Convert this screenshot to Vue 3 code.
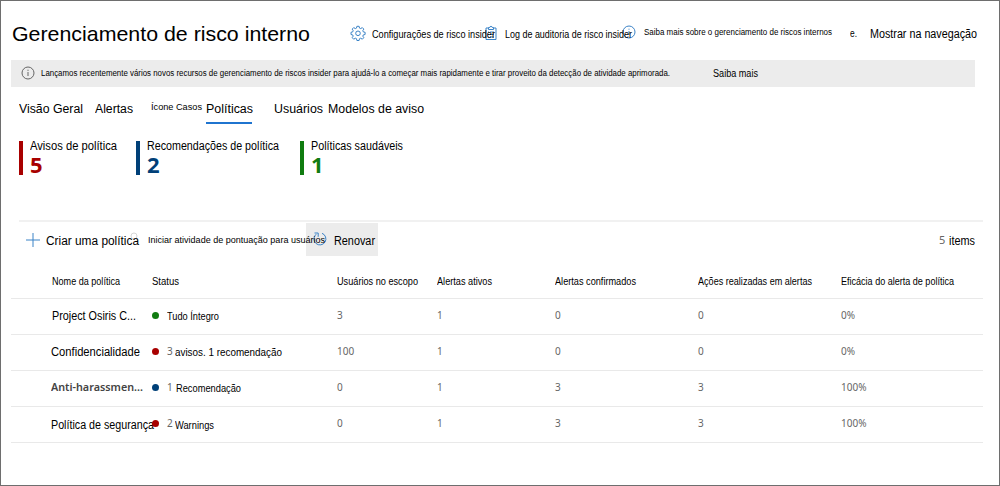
<script setup>
// Fits a label horizontally to the width (in px) given as the directive's value.
const vFit = {
  mounted(el, { value }) {
    const natural = el.getBoundingClientRect().width
    if (natural) el.style.transform = `scaleX(${value / natural})`
  },
}

const stats = [
  { label: 'Avisos de política', width: 87, value: 5, tone: 'red' },
  { label: 'Recomendações de política', width: 132, value: 2, tone: 'blue' },
  { label: 'Políticas saudáveis', width: 92, value: 1, tone: 'green' },
]

const columns = [
  { label: 'Nome da política', width: 68 },
  { label: 'Status', width: 27 },
  { label: 'Usuários no escopo', width: 81 },
  { label: 'Alertas ativos', width: 55 },
  { label: 'Alertas confirmados', width: 81 },
  { label: 'Ações realizadas em alertas', width: 114 },
  { label: 'Eficácia do alerta de política', width: 113 },
]

const rows = [
  { name: 'Project Osiris C...', nameWidth: 84, tone: 'green', count: '', status: 'Tudo Íntegro', statusWidth: 52, values: [3, 1, 0, 0, '0%'] },
  { name: 'Confidencialidade', nameWidth: 89, tone: 'red', count: '3', status: 'avisos. 1 recomendação', statusWidth: 107, values: [100, 1, 0, 0, '0%'] },
  { name: 'Anti-harassmen...', nameWidth: 92, strong: true, tone: 'blue', count: '1', status: 'Recomendação', statusWidth: 65, values: [0, 1, 3, 3, '100%'] },
  { name: 'Política de segurança', nameWidth: 103, tone: 'red', count: '2', status: 'Warnings', statusWidth: 39, values: [0, 1, 3, 3, '100%'] },
]
</script>

<template>
  <main class="page">
    <header class="top">
      <h1 v-fit="298" class="txt title">Gerenciamento de risco interno</h1>
      <svg class="ico" width="16" height="16" viewBox="0 0 16 16">
        <path d="M6.900 1.300h2.200l.4 1.800 1.200.5 1.600-1 1.500 1.500-1 1.600.5 1.200 1.800.4v2.200l-1.800.4-.5 1.200 1 1.600-1.500 1.500-1.600-1-1.200.5-.4 1.800H6.900l-.4-1.800-1.200-.5-1.600 1-1.500-1.500 1-1.600-.5-1.200-1.700-.4V7.300l1.700-.4.5-1.200-1-1.600 1.500-1.500 1.600 1 1.200-.5z" />
        <circle cx="8" cy="8.300" r="2.300" />
      </svg>
      <span v-fit="123" class="txt s11">Configurações de risco insider</span>
      <svg class="ico" width="14" height="16" viewBox="0 0 14 16">
        <path d="M4.500 3H2v11.500h10V3H9.500M4.500 4.500v-2h1.300a1.200 1.200 0 0 1 2.400 0h1.300v2zM4 7h1M6 7h4M4 9.500h1M6 9.500h4M4 12h1M6 12h4" />
      </svg>
      <span v-fit="127" class="txt s11">Log de auditoria de risco insider</span>
      <svg class="ico" width="14" height="14" viewBox="0 0 14 14">
        <circle cx="7" cy="7" r="6" />
        <path d="M7 6v4M7 3.700v1" />
      </svg>
      <span v-fit="188" class="txt s8">Saiba mais sobre o gerenciamento de riscos internos</span>
      <span v-fit="7" class="txt s10">e.</span>
      <span v-fit="107" class="txt s12">Mostrar na navegação</span>
    </header>

    <section class="banner">
      <svg class="info" width="14" height="14" viewBox="0 0 14 14">
        <circle cx="7" cy="7" r="6" />
        <path d="M7 6v4M7 3.700v1.200" />
      </svg>
      <span v-fit="629" class="txt s8">Lançamos recentemente vários novos recursos de gerenciamento de riscos insider para ajudá-lo a começar mais rapidamente e tirar proveito da detecção de atividade aprimorada.</span>
      <span v-fit="45" class="txt s10 more">Saiba mais</span>
    </section>

    <nav class="tabs">
      <span v-fit="64" class="txt s12">Visão Geral</span>
      <span v-fit="38" class="txt s12">Alertas</span>
      <span v-fit="51" class="txt s9">Ícone Casos</span>
      <span class="tab-active"><span v-fit="47" class="txt s12">Políticas</span></span>
      <span v-fit="49" class="txt s12">Usuários</span>
      <span v-fit="96" class="txt s12">Modelos de aviso</span>
    </nav>

    <section class="stats">
      <div v-for="s in stats" :key="s.label" class="stat" :class="s.tone">
        <span v-fit="s.width" class="txt s12 stat-label">{{ s.label }}</span>
        <strong class="stat-value">{{ s.value }}</strong>
      </div>
    </section>

    <section class="toolbar">
      <svg class="ico plus" width="14" height="14" viewBox="0 0 14 14"><path d="M7 0v14M0 7h14" /></svg>
      <span v-fit="93" class="txt s12">Criar uma política</span>
      <svg class="person" width="12" height="11" viewBox="0 0 12 11"><circle cx="6" cy="4" r="3" /><path d="M8 6.500l2 2.500" /></svg>
      <span v-fit="177" class="txt s9 start">Iniciar atividade de pontuação para usuários</span>
      <div class="refresh">
        <svg class="ico" width="16" height="16" viewBox="0 0 16 16">
          <path d="M10 2.300a6 6 0 1 1-5.800.9M2.500 2h3.700v3.800" />
        </svg>
        <span v-fit="41" class="txt s12">Renovar</span>
      </div>
      <span class="num total">5</span>
      <span v-fit="26" class="txt s12">items</span>
    </section>

    <section class="table">
      <div class="row head">
        <span v-for="c in columns" :key="c.label" v-fit="c.width" class="txt s10">{{ c.label }}</span>
      </div>
      <div v-for="r in rows" :key="r.name" class="row">
        <span v-fit="r.nameWidth" class="txt s12 name" :class="{ strong: r.strong }">{{ r.name }}</span>
        <div class="status">
          <i class="dot" :class="r.tone"></i>
          <span v-if="r.count" class="num count">{{ r.count }}</span>
          <span v-fit="r.statusWidth" class="txt s10 status-text">{{ r.status }}</span>
        </div>
        <span v-for="(v, i) in r.values" :key="i" class="num">{{ v }}</span>
      </div>
    </section>
  </main>
</template>

<style>
body { background: #fff; }
</style>

<style scoped>
.page {
  box-sizing: border-box;
  width: 1000px;
  height: 486px;
  border: 1px solid #6e6e6e;
  overflow: hidden;
  background: #fff;
  color: #000;
  font-family: "Liberation Sans", Arial, sans-serif;
}
.txt {
  display: block;
  flex: none;
  width: max-content;
  margin: 0;
  line-height: 16px;
  white-space: nowrap;
  transform-origin: 0 0;
}
.s8 { font-size: 8.500px; }
.s9 { font-size: 9.500px; }
.s10 { font-size: 10px; }
.s11 { font-size: 11px; }
.s12 { font-size: 12px; }
svg { display: block; flex: none; fill: none; }
.ico { stroke: #3b83c7; stroke-width: 1; }
.num {
  font-family: "Noto Sans", sans-serif;
  font-size: 10px;
  line-height: 16px;
  color: #666;
}

.top {
  display: grid;
  grid-template-columns: 337px 22px 112px 21px 117px 22px 206px 20px 120px;
  align-items: start;
  height: 33px;
  padding: 25px 0 0 12px;
}
.title { margin-left: -1px; font-size: 21px; font-weight: 400; }
.top .s8 { margin-top: -2px; }
.top .ico { margin-top: -1px; }

.banner {
  display: grid;
  grid-template-columns: 20px 672px 60px;
  align-items: start;
  width: 954px;
  height: 22px;
  margin: 1px 0 0 10px;
  padding: 5px 0 0 10px;
  background: #ececec;
}
.banner .more { margin-top: 1px; }
.info { margin-top: 1px; stroke: #666; }

.tabs {
  display: grid;
  grid-template-columns: 76px 56px 55px 68px 54px 100px;
  align-items: start;
  height: 24px;
  margin: 14px 0 0 18px;
}
.tabs .s9 { margin-top: -2px; }
.tab-active {
  width: 46px;
  height: 21px;
  border-bottom: 2px solid #1f74cf;
}

.stats {
  display: grid;
  grid-template-columns: 117px 164px 120px;
  margin: 16px 0 0 18px;
}
.stat {
  height: 34px;
  padding-left: 7px;
  border-left: 4px solid;
}
.stat-label { margin-top: -3px; color: #000; }
.stat-value {
  display: block;
  font: 700 22px/20px "Open Sans", "Noto Sans", sans-serif;
}
.stat.red { color: #a80000; }
.stat.blue { color: #004078; }
.stat.green { color: #107c10; }

.toolbar {
  display: grid;
  grid-template-columns: 20px 82px 20px 158px 633px 10px 30px;
  align-items: start;
  width: 957px;
  height: 37px;
  margin: 45px 0 0 18px;
  padding-left: 7px;
  border-top: 2px solid #f1f1f1;
}
.toolbar > .txt { margin-top: 11px; }
.plus { margin-top: 11px; }
.person { margin-top: 10px; stroke: #d6d6d6; }
.refresh {
  display: flex;
  width: 67px;
  height: 33px;
  margin-top: 1px;
  padding-left: 5px;
  background: #ececec;
}
.refresh .ico { margin: 8px 7px 0 1px; }
.refresh .txt { margin: 10px 0 0 -1px; }
.toolbar > .start { position: relative; z-index: 1; margin-top: 10px; }
.total { margin-top: 10px; font-size: 11px; }

.table { width: 972px; margin-left: 10px; }
.row {
  display: grid;
  grid-template-columns: 100px 185px 100px 118px 143px 143px 140px;
  align-items: start;
  box-sizing: border-box;
  height: 36px;
  padding: 8px 0 0 41px;
  border-bottom: 1px solid #e9e9e9;
}
.head { height: 40px; padding-top: 15px; }
.name { margin-top: 1px; }
.row:nth-child(n + 3) .name { margin-left: -1px; }
.row:last-child .name { margin-top: 2px; }
.strong { font: 600 11.500px/16px "Noto Sans", sans-serif; color: #444; }
.row .name.strong { margin-top: 0; }
.status { display: flex; align-items: flex-start; }
.dot { width: 7px; height: 7px; margin: 5px 8px 0 0; border-radius: 50%; position: relative; z-index: 1; }
.count { width: 8px; }
.status-text { margin-top: 2px; }
.row:nth-child(n + 4) .count + .status-text { margin-left: 1px; }
.row:last-child .count + .status-text { margin-left: 0; margin-top: 3px; }
.dot.red { background: #a80000; }
.dot.blue { background: #004078; }
.dot.green { background: #107c10; }
</style>
